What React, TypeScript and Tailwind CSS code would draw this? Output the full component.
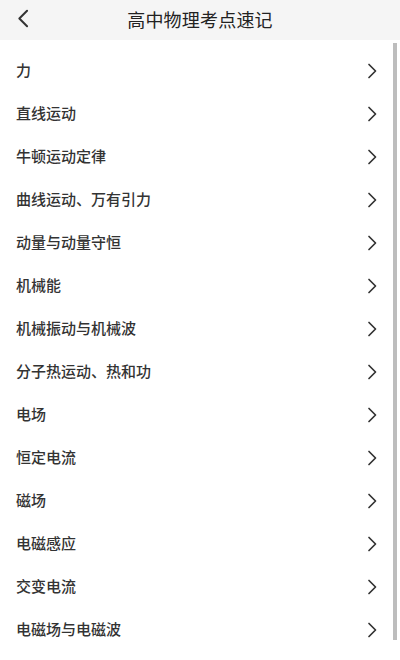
import React from 'react';

const topics = [
    '力',
    '直线运动',
    '牛顿运动定律',
    '曲线运动、万有引力',
    '动量与动量守恒',
    '机械能',
    '机械振动与机械波',
    '分子热运动、热和功',
    '电场',
    '恒定电流',
    '磁场',
    '电磁感应',
    '交变电流',
    '电磁场与电磁波',
];

const Chevron: React.FC<{ dir: 'left' | 'right'; className?: string }> = ({ dir, className }) => (
    <svg viewBox="0 0 10 16" className={className} fill="none" stroke="currentColor" strokeWidth={1.7} strokeLinecap="round" strokeLinejoin="round">
        {dir === 'right' ? <path d="M2 1.5 L8.5 8 L2 14.5" /> : <path d="M8 1.5 L1.5 8 L8 14.5" />}
    </svg>
);

const App: React.FC = () => {
    return (
        <div className="relative w-[400px] h-[660px] overflow-hidden bg-white font-['Noto_Sans_CJK_SC','Noto_Sans',sans-serif]">
            {/* Header */}
            <div className="relative h-10 bg-[#f5f5f5] flex items-center justify-center">
                <button className="absolute left-[17px] top-[9px] text-[#333]">
                    <Chevron dir="left" className="w-[13px] h-[19px]" />
                </button>
                <h1 className="text-[18px] text-[#222] tracking-[0.2px] -mt-[2px]">高中物理考点速记</h1>
            </div>

            {/* List */}
            <div className="pt-[9px]">
                {topics.map((t) => (
                    <div key={t} className="h-[43px] flex items-center justify-between pl-4 pr-[23px]">
                        <span className="text-[15px] font-medium text-[#333]">{t}</span>
                        <Chevron dir="right" className="w-[10px] h-[16px] text-[#333]" />
                    </div>
                ))}
            </div>

            {/* Scrollbar */}
            <div className="absolute right-[3px] top-[43px] w-[4px] h-[597px] bg-[#bdbdbd]" />
        </div>
    );
};

export default App;
